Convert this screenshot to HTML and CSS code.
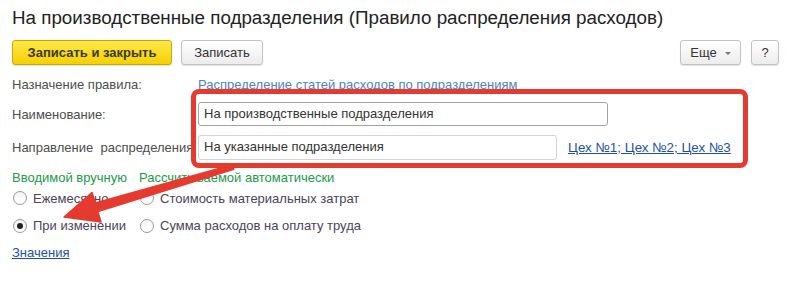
FILE: index.html
```html
<!DOCTYPE html>
<html lang="ru">
<head>
<meta charset="utf-8">
<title>На производственные подразделения</title>
<link rel="stylesheet" href="styles.css">
</head>
<body>
<div class="page">
  <h1 class="title">На производственные подразделения (Правило распределения расходов)</h1>
  <div class="toolbar">
    <div class="tb-left">
      <button class="btn btn-primary">Записать и закрыть</button>
      <button class="btn btn-save">Записать</button>
    </div>
    <div class="tb-right">
      <button class="btn btn-more">Еще<span class="caret"></span></button>
      <button class="btn btn-help">?</button>
    </div>
  </div>

  <div class="row row-purpose">
    <span class="label">Назначение правила:</span>
    <a class="link-plain">Распределение статей расходов по подразделениям</a>
  </div>
  <div class="row row-name">
    <span class="label">Наименование:</span>
    <div class="input input-name">На производственные подразделения</div>
  </div>
  <div class="row row-dir">
    <span class="label">Направление&nbsp; распределения</span>
    <div class="input input-dir">На указанные подразделения</div>
    <a class="link-ul link-dep">Цех №1; Цех №2; Цех №3</a>
  </div>

  <div class="options">
    <span class="group-title">Вводимой вручную</span>
    <span class="group-title">Рассчитываемой автоматически</span>
    <label class="radio r1"><span class="dot"></span>Ежемесячно</label>
    <label class="radio r1"><span class="dot"></span>Стоимость материальных затрат</label>
    <label class="radio r2"><span class="dot checked"></span>При изменении</label>
    <label class="radio r2"><span class="dot"></span>Сумма расходов на оплату труда</label>
  </div>

  <div class="values"><a class="link-ul">Значения</a></div>

  <div class="highlight"></div>
  <svg class="arrow" width="792" height="285" viewBox="0 0 792 285">
    <polygon points="64,217 101,222 97.9,211.6 233.7,169.4 232.3,164.6 95.3,203 92,192.6" fill="#e53a30" stroke="#e53a30" stroke-width="1.5" stroke-linejoin="round"/>
  </svg>
</div>
</body>
</html>
```

FILE: styles.css
```css
* { box-sizing: border-box; }
html, body { margin: 0; padding: 0; background: #fff; }
body {
  font-family: "Liberation Sans", Arial, sans-serif;
  font-size: 13px;
  color: #4d4d4d;
  width: 792px;
  height: 285px;
  overflow: hidden;
}
.page { position: relative; padding: 7px 13px 0 12px; height: 285px; }

.title {
  margin: 0;
  font-size: 18.8px;
  line-height: 22px;
  font-weight: normal;
  color: #222;
  white-space: nowrap;
}

.toolbar {
  display: flex;
  justify-content: space-between;
  margin-top: 11px;
  height: 25px;
}
.tb-left, .tb-right { display: flex; gap: 9px; }
.tb-right { gap: 10px; }
.btn {
  height: 25px;
  font-family: inherit;
  font-size: 13px;
  color: #333;
  border: 1px solid #c2c2c2;
  border-radius: 3px;
  background: linear-gradient(#ffffff, #ececec);
  box-shadow: 0 1px 1px rgba(0,0,0,0.12);
  padding: 0;
  margin: 0;
  line-height: 23px;
  white-space: nowrap;
  text-align: center;
}
.btn-primary {
  width: 160px;
  font-weight: bold;
  color: #3a3a1a;
  background: linear-gradient(#ffe84d, #f5d000);
  border-color: #c9a900;
}
.btn-save { width: 82px; }
.btn-more { width: 61px; }
.caret {
  display: inline-block;
  width: 0; height: 0;
  border-left: 3px solid transparent;
  border-right: 3px solid transparent;
  border-top: 3px solid #777;
  vertical-align: middle;
  margin-left: 8px;
}
.btn-help { width: 28px; }

.row { display: flex; align-items: center; }
.label { width: 186px; flex: none; white-space: nowrap; color: #4d4d4d; }
.row-purpose { margin-top: 11px; height: 16px; }
.row-name { margin-top: 10px; height: 24px; }
.row-dir { margin-top: 9px; height: 25px; }

.link-plain { color: #4a83c4; text-decoration: none; white-space: nowrap; }
.link-ul { color: #1f4fa3; text-decoration: underline; white-space: nowrap; }

.input {
  height: 100%;
  border: 1px solid #a3a3a3;
  border-radius: 3px;
  padding: 0 5px;
  line-height: 22px;
  color: #333;
  background: #fff;
}
.input-name { width: 410px; }
.input-dir { width: 359px; border-color: #d4d4d4; }
.link-dep { margin-left: 11px; font-size: 13.4px; }

.options {
  display: grid;
  grid-template-columns: 127px auto;
  margin-top: 10px;
  align-items: center;
}
.group-title { color: #23994a; height: 16px; line-height: 16px; white-space: nowrap; }
.radio {
  display: flex;
  align-items: center;
  color: #4a4458;
  height: 18px;
  padding-left: 1px;
  white-space: nowrap;
}
.radio.r1 { margin-top: 3px; }
.radio.r2 { margin-top: 9.5px; }
.dot {
  width: 14px; height: 14px;
  flex: none;
  border: 1px solid #9a9a9a;
  border-radius: 50%;
  background: linear-gradient(#f4f4f4, #ffffff);
  margin-right: 6px;
  display: flex; align-items: center; justify-content: center;
}
.dot.checked::after {
  content: "";
  width: 6px; height: 6px;
  border-radius: 50%;
  background: #222;
}

.values { margin-top: 10.5px; height: 16px; line-height: 16px; }

.highlight {
  position: absolute;
  left: 191px;
  top: 89px;
  width: 557px;
  height: 79px;
  border: 5px solid #e53a30;
  border-radius: 8px;
  pointer-events: none;
}
.arrow { position: absolute; left: 0; top: 0; pointer-events: none; }
```
